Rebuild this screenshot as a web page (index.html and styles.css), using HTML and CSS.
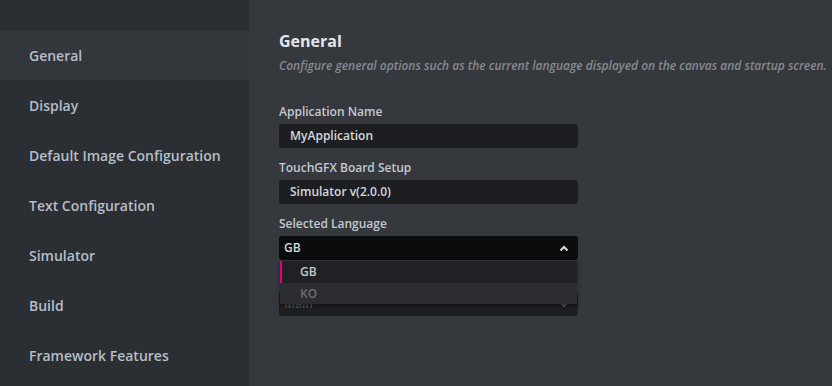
FILE: index.html
```html
<!DOCTYPE html>
<html>
<head>
    <title>Project Configuration</title>
    <link rel="stylesheet" href="styles.css">
</head>
<body>
    <div class="layout">
        <div class="sidebar">
            <div class="nav-item active">General</div>
            <div class="nav-item">Display</div>
            <div class="nav-item">Default Image Configuration</div>
            <div class="nav-item">Text Configuration</div>
            <div class="nav-item">Simulator</div>
            <div class="nav-item">Build</div>
            <div class="nav-item">Framework Features</div>
        </div>

        <div class="content">
            <h1>General</h1>
            <p class="subtitle">Configure general options such as the current language displayed on the canvas and startup screen.</p>

            <div class="field">
                <label>Application Name</label>
                <div class="input">MyApplication</div>
            </div>
            <div class="field">
                <label>TouchGFX Board Setup</label>
                <div class="input">Simulator v(2.0.0)</div>
            </div>
            <div class="field">
                <label>Selected Language</label>
                <div class="select-wrap">
                    <div class="input select open">
                        GB
                        <svg class="caret" width="10" height="7" viewBox="0 0 10 7"><path d="M1.5 5.5 L5 2 L8.5 5.5" fill="none" stroke="#d6dae0" stroke-width="2"/></svg>
                    </div>
                    <div class="dropdown">
                        <div class="option selected">GB</div>
                        <div class="option dim">KO</div>
                    </div>
                    <div class="input select under">
                        Main
                        <svg class="caret" width="10" height="7" viewBox="0 0 10 7"><path d="M1.5 1.5 L5 5 L8.5 1.5" fill="none" stroke="#55585d" stroke-width="2"/></svg>
                    </div>
                </div>
            </div>
        </div>
    </div>
</body>
</html>
```

FILE: styles.css
```css
body {
    margin: 0;
    font-family: "Open Sans", "Noto Sans", sans-serif;
    background-color: #35383d;
    overflow: hidden;
}
.layout {
    display: flex;
    height: 386px;
}
.sidebar {
    width: 249px;
    background-color: #2b2e32;
    padding-top: 30px;
    box-sizing: border-box;
}
.nav-item {
    height: 49px;
    padding-top: 1px;
    line-height: 49px;
    padding-left: 29px;
    font-size: 14px;
    font-weight: 600;
    color: #b6bec8;
}
.nav-item.active {
    background-color: #33363b;
}
.content {
    flex: 1;
    padding: 29px 0 0 30px;
}
h1 {
    margin: 0;
    font-size: 16px;
    font-weight: 700;
    color: #e2e6ea;
    line-height: 24px;
}
.subtitle {
    margin: 5px 0 30px;
    font-size: 12px;
    font-style: italic;
    font-weight: 600;
    color: #868a90;
    line-height: 16px;
}
.field {
    margin-bottom: 12px;
}
label {
    display: block;
    font-size: 12px;
    font-weight: 600;
    color: #c4c9d0;
    line-height: 16px;
    margin-bottom: 4px;
}
.input {
    width: 299px;
    height: 24px;
    box-sizing: border-box;
    background-color: #1d1e21;
    border-radius: 3px;
    padding-left: 11px;
    font-size: 12px;
    font-weight: 600;
    color: #d4d8de;
    line-height: 24px;
}
.select-wrap {
    position: relative;
}
.select {
    display: flex;
    justify-content: space-between;
    align-items: center;
    padding-left: 5px;
    padding-right: 9px;
}
.select.open {
    background-color: #0b0c0d;
}
.select.under {
    margin-top: 32px;
    color: #55585d;
}
.dropdown {
    position: absolute;
    top: 25px;
    left: 1px;
    width: 297px;
    box-shadow: 0 2px 4px rgba(0, 0, 0, 0.45);
    z-index: 2;
}
.option {
    height: 22px;
    line-height: 22px;
    padding-left: 20px;
    font-size: 12px;
    font-weight: 600;
    color: #c4c9d0;
    background-color: #202124;
}
.option.selected {
    border-left: 2px solid #e6007e;
    padding-left: 18px;
}
.option.dim {
    height: 21px;
    background-color: #2b2d31;
    color: #6b6e73;
}
```
